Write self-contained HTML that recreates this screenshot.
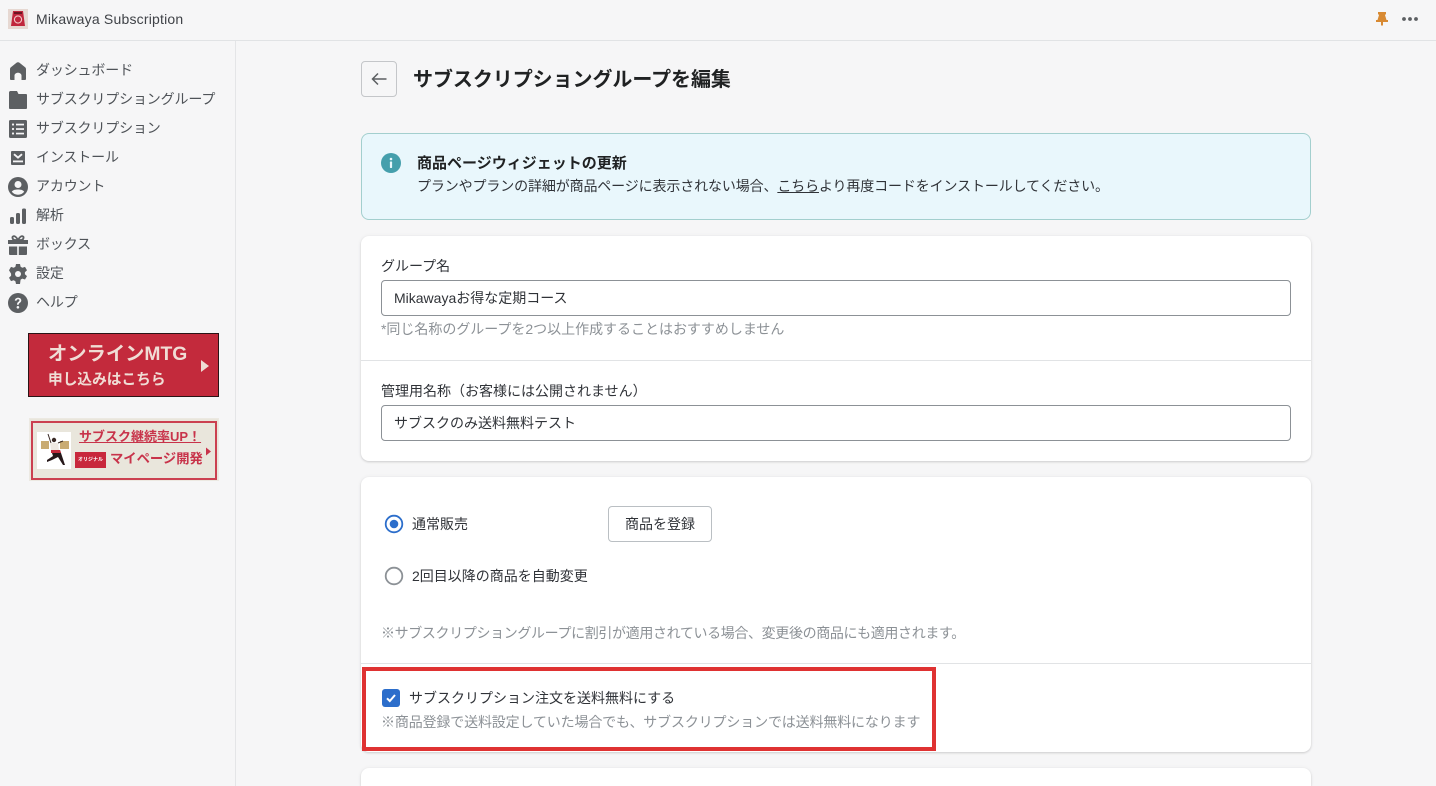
<!DOCTYPE html>
<html lang="ja"><head><meta charset="utf-8">
<style>
*{box-sizing:border-box}
html,body{margin:0;padding:0;width:1436px;height:786px;overflow:hidden;background:#f6f6f7}
#root{position:absolute;left:0;top:0;width:1436px;height:786px;overflow:hidden;background:#f6f6f7;font-family:"Liberation Sans","Noto Sans CJK JP",sans-serif;font-size:14px;color:#303338}
.a{position:absolute;white-space:nowrap}
.t{position:absolute;white-space:nowrap;line-height:20px}
.card{position:absolute;left:361px;width:950px;background:#fff;border-radius:8px;box-shadow:0 0 5px rgba(23,24,24,.05),0 1px 2px rgba(0,0,0,.15)}
.inp{position:absolute;left:381px;width:910px;height:36px;border:1px solid #8c9196;border-radius:4px;background:#fff;padding:0 12px;line-height:34px;white-space:nowrap;color:#303338}
.nav{position:absolute;left:36px;white-space:nowrap;line-height:20px;color:#4f5358;font-size:14px;letter-spacing:-.15px}
svg{position:absolute;display:block}
.gr{color:#8c9196}
</style></head><body><div id="root">

<div class="a" style="left:0;top:0;width:1436px;height:41px;background:#f6f6f7;border-bottom:1px solid #e1e3e5"></div>
<div class="a" style="left:235px;top:41px;width:1px;height:745px;background:#e4e5e7"></div>

<svg style="left:8px;top:9px" width="20" height="20" viewBox="0 0 20 20"><rect width="20" height="20" fill="#e6d8d2"/><path d="M5 2h10l2 15H3z" fill="#c0263c"/><path d="M6 3h8v2H6z" fill="#6b1420"/><circle cx="10" cy="10.500" r="3.600" fill="none" stroke="#f3c6c6" stroke-width="1.100"/></svg>
<div class="t" style="left:36px;top:9px;font-size:14px;color:#3f4247;letter-spacing:.2px">Mikawaya Subscription</div>

<svg style="left:1375px;top:11px" width="14" height="16" viewBox="0 0 14 16"><path d="M3 1h8v2l-1 1 1.500 5H13v2H1V9h1.500L4 4 3 3z M6 11h2v3.500H6z" fill="#d88a33"/></svg>
<svg style="left:1401px;top:15px" width="18" height="8" viewBox="0 0 18 8"><circle cx="3" cy="4" r="1.900" fill="#5c5f62"/><circle cx="9" cy="4" r="1.900" fill="#5c5f62"/><circle cx="15" cy="4" r="1.900" fill="#5c5f62"/></svg>

<!-- sidebar icons -->
<svg style="left:8px;top:60px" width="20" height="20" viewBox="0 0 20 20"><path d="M10 2.200c-.6 0-1.100.2-1.500.6L2.900 7.300c-.6.500-.9 1.100-.9 1.900V19c0 .6.400 1 1 1h3.500v-4.500c0-1.500 1.500-2.800 3.500-2.800s3.500 1.300 3.500 2.800V20H17c.6 0 1-.4 1-1V9.200c0-.8-.3-1.400-.9-1.900l-5.600-4.500c-.4-.4-.9-.6-1.500-.6z" fill="#5c5f62"/></svg>
<svg style="left:8px;top:89px" width="20" height="20" viewBox="0 0 20 20"><path d="M1 3.500C1 2.700 1.700 2 2.500 2H9l1.500 3H18c.6 0 1 .4 1 1v13c0 .6-.4 1-1 1H2c-.6 0-1-.4-1-1z" fill="#5c5f62"/></svg>
<svg style="left:8px;top:118px" width="20" height="20" viewBox="0 0 20 20"><rect x="1" y="2" width="18" height="18" rx="1.500" fill="#5c5f62"/><g fill="#f6f6f7"><circle cx="5" cy="6.500" r="1.100"/><circle cx="5" cy="11" r="1.100"/><circle cx="5" cy="15.500" r="1.100"/><rect x="8" y="5.700" width="8" height="1.700"/><rect x="8" y="10.200" width="8" height="1.700"/><rect x="8" y="14.700" width="8" height="1.700"/></g></svg>
<svg style="left:8px;top:148px" width="20" height="20" viewBox="0 0 20 20"><rect x="3" y="3" width="14" height="14" rx="1" fill="#5c5f62"/><path d="M6 6.200 10 9.600l4-3.400" fill="none" stroke="#f6f6f7" stroke-width="1.900"/><rect x="5" y="12.500" width="10" height="1.800" fill="#f6f6f7"/></svg>
<svg style="left:8px;top:177px" width="20" height="20" viewBox="0 0 20 20"><circle cx="10" cy="10" r="10" fill="#5c5f62"/><circle cx="10" cy="7.500" r="3.500" fill="#f6f6f7"/><path d="M3.800 14.800C5 12.900 7.300 12.500 10 12.500s5 .4 6.200 2.300C14.700 16.700 12.500 17.800 10 17.800s-4.700-1.100-6.200-3z" fill="#f6f6f7"/></svg>
<svg style="left:8px;top:206px" width="20" height="20" viewBox="0 0 20 20"><rect x="2" y="11" width="4" height="7" rx="1.500" fill="#5c5f62"/><rect x="8" y="7" width="4" height="11" rx="1.500" fill="#5c5f62"/><rect x="14" y="2.500" width="4" height="15.500" rx="1.500" fill="#5c5f62"/></svg>
<svg style="left:8px;top:235px" width="20" height="20" viewBox="0 0 20 20"><path d="M0 5h20v4H0z M1 11.500h8.200V20H2c-.6 0-1-.4-1-1z M10.800 11.500H19V19c0 .6-.4 1-1 1h-7.200z" fill="#5c5f62"/><path d="M10 5C8.500 2.400 7 .8 5.500 1.200 3.800 1.700 4.200 4.500 6.500 5h7C15.800 4.500 16.200 1.700 14.500 1.200 13 .8 11.500 2.400 10 5z" fill="none" stroke="#5c5f62" stroke-width="1.800"/></svg>
<svg style="left:8px;top:264px" width="20" height="20" viewBox="0 0 20 20"><path d="M8 0h4l.6 2.800 1.700 1 2.700-.9 2 3.400-2.100 1.900v2l2.100 1.900-2 3.400-2.700-.9-1.700 1L12 20H8l-.6-2.800-1.700-1-2.700.9-2-3.400 2.100-1.900v-2L1 6.300l2-3.400 2.700.9 1.700-1z" fill="#5c5f62"/><circle cx="10" cy="10" r="3" fill="#f6f6f7"/></svg>
<svg style="left:8px;top:293px" width="20" height="20" viewBox="0 0 20 20"><circle cx="10" cy="10" r="10" fill="#5c5f62"/><path d="M6.800 7.600C6.900 5.800 8.300 4.700 10.100 4.700c1.900 0 3.200 1.100 3.200 2.700 0 2.400-2.600 2.300-2.600 4.400H9c0-3 2.400-3 2.400-4.400 0-.7-.5-1.100-1.300-1.100-.8 0-1.400.5-1.500 1.300z" fill="#f6f6f7"/><circle cx="9.900" cy="14.300" r="1.300" fill="#f6f6f7"/></svg>

<div class="nav" style="top:60px">ダッシュボード</div>
<div class="nav" style="top:89px">サブスクリプショングループ</div>
<div class="nav" style="top:118px">サブスクリプション</div>
<div class="nav" style="top:147px">インストール</div>
<div class="nav" style="top:176px">アカウント</div>
<div class="nav" style="top:205px">解析</div>
<div class="nav" style="top:234px">ボックス</div>
<div class="nav" style="top:263px">設定</div>
<div class="nav" style="top:292px">ヘルプ</div>

<!-- banner 1 -->
<div class="a" style="left:28px;top:333px;width:191px;height:64px;background:#c32a3c;border:1px solid #2a1416"></div>
<div class="t" style="left:48px;top:344px;font-size:19.300px;font-weight:700;color:#f0ddd5;line-height:22px">オンラインMTG</div>
<div class="t" style="left:48px;top:370px;font-size:14.700px;font-weight:700;color:#f0ddd5;line-height:20px">申し込みはこちら</div>
<svg style="left:200px;top:359px" width="10" height="14" viewBox="0 0 10 14"><path d="M1 1l8 6-8 6z" fill="#efdcd4"/></svg>

<!-- banner 2 -->
<div class="a" style="left:29px;top:418px;width:190px;height:63px;background:#e9e6dc;border:1px solid #ece9e2"></div>
<div class="a" style="left:31px;top:421px;width:186px;height:59px;border:2px solid #cb4050"></div>
<div class="a" style="left:37px;top:432px;width:34px;height:37px;background:#fff"></div>
<svg style="left:37px;top:432px" width="34" height="37" viewBox="0 0 34 37"><rect x="4" y="9" width="8" height="8" fill="#c9ab72"/><rect x="23" y="9" width="9" height="8" fill="#c9ab72"/><path d="M11 2l3 9M26 9l-5 2" stroke="#3a2a26" stroke-width="1" fill="none"/><circle cx="17" cy="8" r="2.200" fill="#3a2a26"/><path d="M13 11h8l1 7h-8z" fill="#efe9e2"/><path d="M14 18h9l2 6 3 9-2 0-5-8-6 3-5 2 0-2 6-4z" fill="#26181a"/><path d="M14 18h9l1 3h-10z" fill="#c32a3c"/></svg>
<div class="t" style="left:79px;top:428px;font-size:13px;font-weight:700;color:#c8334a;line-height:18px;text-decoration:underline;letter-spacing:0">サブスク継続率UP！</div>
<div class="a" style="left:75px;top:452px;width:31px;height:16px;background:#c8283c"></div>
<div class="t" style="left:78px;top:455px;font-size:5px;font-weight:700;color:#fff;line-height:10px">オリジナル</div>
<div class="t" style="left:110px;top:450px;font-size:13.300px;font-weight:700;color:#c8334a;line-height:18px">マイページ開発</div>
<svg style="left:205px;top:447px" width="7" height="9" viewBox="0 0 7 9"><path d="M1 .5l5 4-5 4z" fill="#c8334a"/></svg>

<!-- header -->
<div class="a" style="left:361px;top:61px;width:36px;height:36px;border:1px solid #c4c6c9;border-radius:4px;background:#f6f6f7"></div>
<svg style="left:370px;top:70px" width="18" height="18" viewBox="0 0 18 18"><path d="M16.500 9H2.500M8 3.500 2.500 9 8 14.500" fill="none" stroke="#5c5f62" stroke-width="1.500"/></svg>
<div class="t" style="left:413px;top:66px;font-size:20px;font-weight:700;color:#202223;line-height:28px;letter-spacing:-.06px">サブスクリプショングループを編集</div>

<!-- banner -->
<div class="a" style="left:361px;top:133px;width:950px;height:87px;background:#e9f7fc;border:1px solid #a3cfce;border-radius:8px"></div>
<svg style="left:381px;top:153px" width="20" height="20" viewBox="0 0 20 20"><circle cx="10" cy="10" r="10" fill="#459fac"/><circle cx="10" cy="6" r="1.300" fill="#e9f7fc"/><rect x="8.900" y="8.500" width="2.200" height="6.500" rx=".6" fill="#e9f7fc"/></svg>
<div class="t" style="left:417px;top:154px;font-size:15px;font-weight:700;color:#202223">商品ページウィジェットの更新</div>
<div class="t" style="left:417px;top:176px;font-size:14px;color:#303338;letter-spacing:-.13px">プランやプランの詳細が商品ページに表示されない場合、<span style="text-decoration:underline">こちら</span>より再度コードをインストールしてください。</div>

<!-- card 1 -->
<div class="card" style="top:236px;height:225px"></div>
<div class="a" style="left:361px;top:360px;width:950px;height:1px;background:#e1e3e5"></div>
<div class="t" style="left:381px;top:256px">グループ名</div>
<div class="inp" style="top:280px">Mikawayaお得な定期コース</div>
<div class="t gr" style="left:381px;top:319px;font-size:14px;letter-spacing:-.02px">*同じ名称のグループを2つ以上作成することはおすすめしません</div>
<div class="t" style="left:381px;top:381px">管理用名称（お客様には公開されません）</div>
<div class="inp" style="top:405px">サブスクのみ送料無料テスト</div>

<!-- card 2 -->
<div class="card" style="top:477px;height:275px"></div>
<svg style="left:384px;top:514px" width="20" height="20" viewBox="0 0 20 20"><circle cx="10" cy="10" r="8.300" fill="#fff" stroke="#2c6ecb" stroke-width="1.800"/><circle cx="10" cy="10" r="4.300" fill="#2c6ecb"/></svg>
<div class="t" style="left:412px;top:514px">通常販売</div>
<div class="a" style="left:608px;top:506px;width:104px;height:36px;border:1px solid #babfc3;border-radius:4px;background:#fff;text-align:center;line-height:34px;color:#303338">商品を登録</div>
<svg style="left:384px;top:566px" width="20" height="20" viewBox="0 0 20 20"><circle cx="10" cy="10" r="8.300" fill="#fff" stroke="#8c9196" stroke-width="1.800"/></svg>
<div class="t" style="left:412px;top:566px">2回目以降の商品を自動変更</div>
<div class="t gr" style="left:381px;top:623px;font-size:14px;letter-spacing:-.36px">※サブスクリプショングループに割引が適用されている場合、変更後の商品にも適用されます。</div>
<div class="a" style="left:361px;top:663px;width:950px;height:1px;background:#e1e3e5"></div>

<div class="a" style="left:382px;top:689px;width:18px;height:18px;background:#2c6ecb;border-radius:3px"></div>
<svg style="left:382px;top:689px" width="18" height="18" viewBox="0 0 18 18"><path d="M5 9.300 7.800 12 13 6" fill="none" stroke="#fff" stroke-width="2"/></svg>
<div class="t" style="left:409px;top:688px">サブスクリプション注文を送料無料にする</div>
<div class="t gr" style="left:381px;top:712px;font-size:14px;letter-spacing:-.15px">※商品登録で送料設定していた場合でも、サブスクリプションでは送料無料になります</div>

<div class="a" style="left:362px;top:667px;width:574px;height:84px;border:4px solid #df3232"></div>

<!-- card 3 -->
<div class="card" style="top:768px;height:18px;border-radius:8px 8px 0 0"></div>

</div></body></html>
